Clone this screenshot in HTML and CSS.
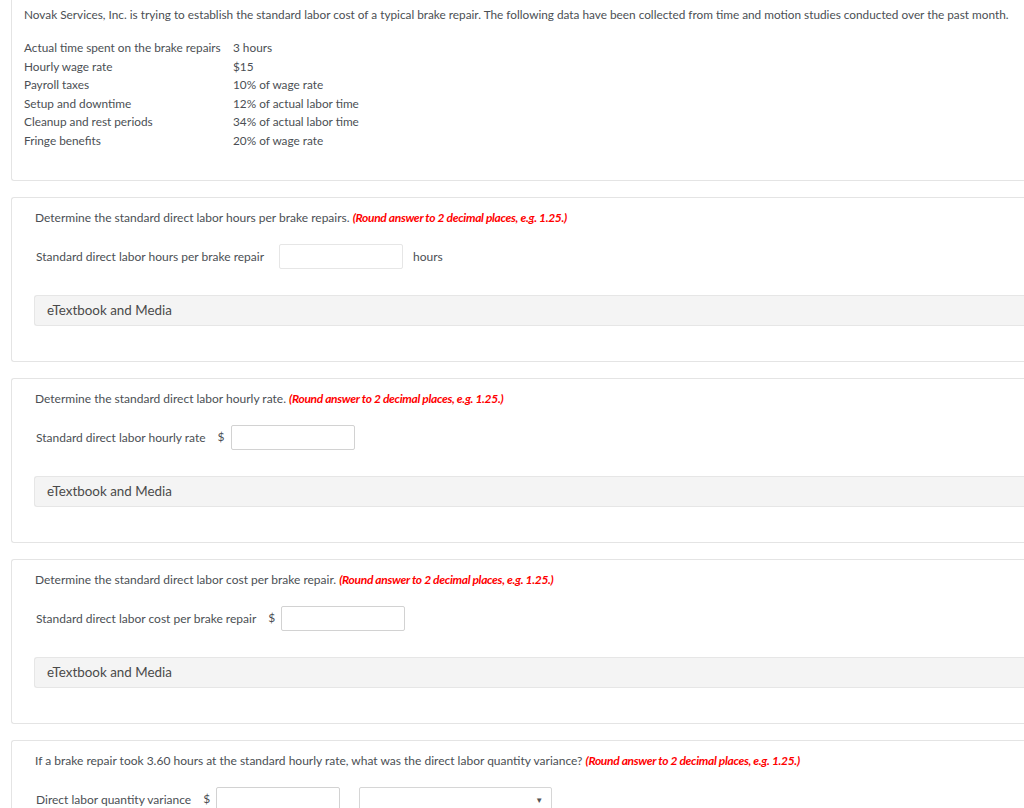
FILE: index.html
```html
<!DOCTYPE html>
<html>
<head>
<meta charset="utf-8">
<link rel="stylesheet" href="styles.css">
</head>
<body>
<div class="page">
  <div class="card card-first">
    <p class="intro">Novak Services, Inc. is trying to establish the standard labor cost of a typical brake repair. The following data have been collected from time and motion studies conducted over the past month.</p>
    <table class="data">
      <tr><td class="c1">Actual time spent on the brake repairs</td><td>3 hours</td></tr>
      <tr><td class="c1">Hourly wage rate</td><td>$15</td></tr>
      <tr><td class="c1">Payroll taxes</td><td>10% of wage rate</td></tr>
      <tr><td class="c1">Setup and downtime</td><td>12% of actual labor time</td></tr>
      <tr><td class="c1">Cleanup and rest periods</td><td>34% of actual labor time</td></tr>
      <tr><td class="c1">Fringe benefits</td><td>20% of wage rate</td></tr>
    </table>
  </div>

  <div class="card card-q">
    <p class="question">Determine the standard direct labor hours per brake repairs. <span class="hint">(Round answer to 2 decimal places, e.g. 1.25.)</span></p>
    <div class="row">
      <span class="label label-wide">Standard direct labor hours per brake repair</span>
      <span class="box box-light"></span>
      <span class="unit">hours</span>
    </div>
    <div class="media">eTextbook and Media</div>
  </div>

  <div class="card card-q">
    <p class="question">Determine the standard direct labor hourly rate. <span class="hint">(Round answer to 2 decimal places, e.g. 1.25.)</span></p>
    <div class="row">
      <span class="label">Standard direct labor hourly rate</span>
      <span class="dollar">$</span>
      <span class="box"></span>
    </div>
    <div class="media">eTextbook and Media</div>
  </div>

  <div class="card card-q">
    <p class="question">Determine the standard direct labor cost per brake repair. <span class="hint">(Round answer to 2 decimal places, e.g. 1.25.)</span></p>
    <div class="row">
      <span class="label">Standard direct labor cost per brake repair</span>
      <span class="dollar">$</span>
      <span class="box"></span>
    </div>
    <div class="media">eTextbook and Media</div>
  </div>

  <div class="card card-q card-last">
    <p class="question">If a brake repair took 3.60 hours at the standard hourly rate, what was the direct labor quantity variance? <span class="hint">(Round answer to 2 decimal places, e.g. 1.25.)</span></p>
    <div class="row">
      <span class="label">Direct labor quantity variance</span>
      <span class="dollar">$</span>
      <span class="box"></span>
      <span class="select"><span class="arrow">▼</span></span>
    </div>
  </div>
</div>
</body>
</html>
```

FILE: styles.css
```css
html, body {
  margin: 0;
  padding: 0;
  background: #ffffff;
}

body {
  font-family: Lato, "Open Sans", "Liberation Sans", sans-serif;
  font-size: 11.8px;
  color: #4b4f54;
  width: 1024px;
  height: 808px;
  overflow: hidden;
}

.page {
  padding-left: 11px;
  overflow: hidden;
}

.card {
  border: 1px solid #e4e4e4;
  border-right: none;
  border-radius: 3px 0 0 3px;
  margin-right: -10px;
  margin-top: 16px;
  background: #fff;
}

.card-first {
  margin-top: 0;
  border-top: none;
  border-radius: 0 0 0 3px;
  padding: 6px 0 27px 12px;
  height: 147px;
}

.intro {
  margin: 0;
  line-height: 18px;
}

.data {
  border-collapse: collapse;
  margin-top: 15px;
}

.data td {
  padding: 0;
  height: 18.6px;
  line-height: 18.6px;
  vertical-align: middle;
}

.data .c1 {
  width: 209px;
}

.card-q {
  padding: 11px 0 0 23px;
  box-sizing: border-box;
  height: 165px;
  font-size: 12px;
}

.question {
  margin: 0;
  line-height: 18px;
}

.hint {
  color: #ff0000;
  font-weight: bold;
  font-style: italic;
  letter-spacing: -0.32px;
}

.row {
  display: flex;
  align-items: center;
  margin-top: 17px;
  height: 25px;
}

.label {
  padding-left: 1px;
  margin-right: 12px;
}

.label-wide {
  margin-right: 15px;
}

.dollar {
  margin-right: 6px;
  position: relative;
  top: -1px;
}

.box {
  display: inline-block;
  width: 122px;
  height: 23px;
  border: 1px solid #d2d2d2;
  border-radius: 2px;
  background: #fff;
}

.box-light {
  border-color: #e6e6e6;
}

.unit {
  margin-left: 10px;
}

.select {
  display: flex;
  align-items: center;
  justify-content: flex-end;
  width: 191px;
  height: 23px;
  margin-left: 19px;
  border: 1px solid #d6d6d6;
  border-radius: 2px;
}

.arrow {
  font-size: 8px;
  color: #555;
  margin-right: 8px;
}

.media {
  margin-top: 26px;
  margin-left: -1px;
  height: 29px;
  line-height: 29px;
  background: #f4f4f4;
  border: 1px solid #e6e6e6;
  border-right: none;
  border-radius: 3px 0 0 3px;
  padding-left: 12px;
  font-size: 13.4px;
  color: #4a4a4a;
}

.card-last {
  height: 120px;
}
```
